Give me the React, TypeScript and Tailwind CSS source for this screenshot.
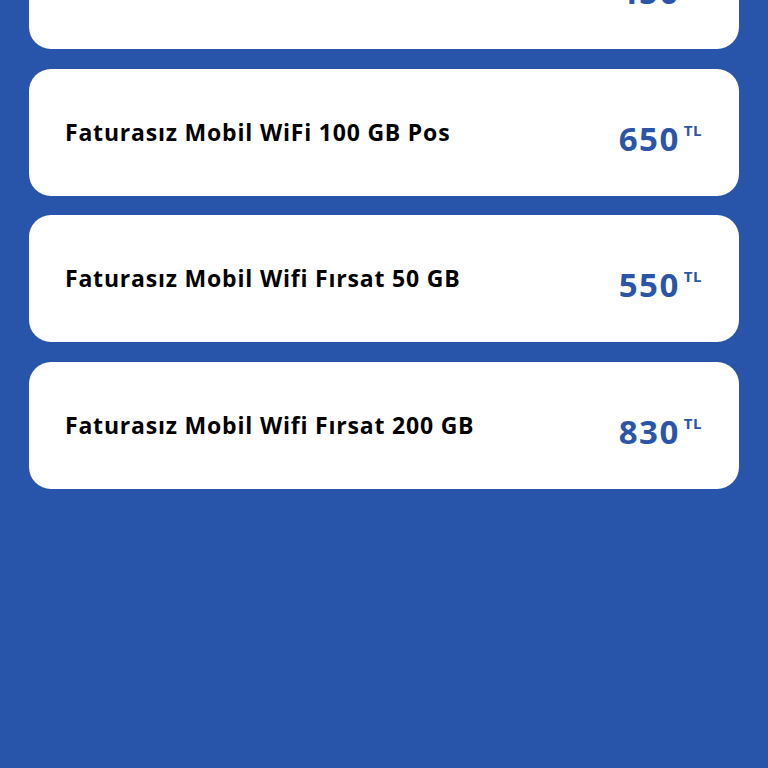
const PLANS = [
  { name: 'Faturasız Mobil Wifi Fırsat 20 GB', price: 450 },
  { name: 'Faturasız Mobil WiFi 100 GB Pos', price: 650 },
  { name: 'Faturasız Mobil Wifi Fırsat 50 GB', price: 550 },
  { name: 'Faturasız Mobil Wifi Fırsat 200 GB', price: 830 },
]

function PlanCard({ name, price }: { name: string; price: number }) {
  return (
    <div className="h-[127px] shrink-0 bg-white rounded-[22px] flex items-center justify-between pl-9 pr-[37px]">
      <span className="text-[23px] font-bold text-black tracking-[0.8px]">{name}</span>
      <div className="flex items-start gap-[4px] mt-[12px] text-[#2a55a9]">
        <span className="text-[33px] font-bold leading-none tracking-[1.5px]">{price}</span>
        <span className="text-[15px] font-bold leading-none mt-[1px] tracking-[0.5px]">TL</span>
      </div>
    </div>
  )
}

export default function App() {
  return (
    <div className="h-screen overflow-hidden bg-[#2855aa] px-[29px]" style={{ fontFamily: '"Open Sans", sans-serif' }}>
      <div className="flex flex-col gap-[19.5px] -mt-[78px]">
        {PLANS.map(p => <PlanCard key={p.name} {...p} />)}
      </div>
    </div>
  )
}
